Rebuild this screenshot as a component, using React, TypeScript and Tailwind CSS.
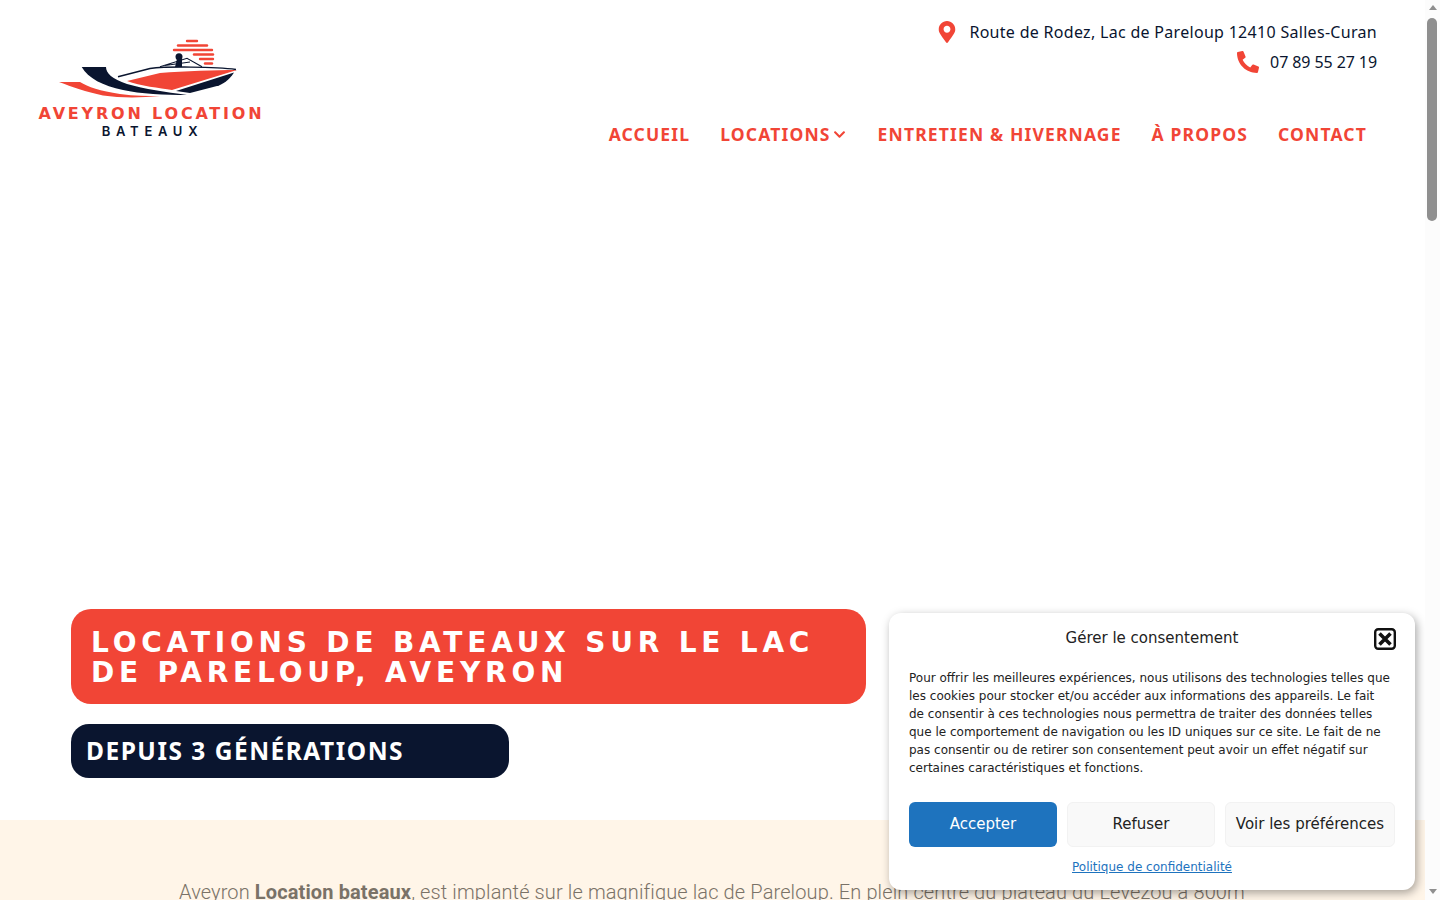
import { FaChevronDown, FaMapMarkerAlt, FaPhoneAlt } from 'react-icons/fa';

const navItems = ['ACCUEIL', 'LOCATIONS', 'ENTRETIEN & HIVERNAGE', 'À PROPOS', 'CONTACT'];

function Logo() {
  return (
    <div className="flex flex-col items-center w-[223px]">
      <svg width="223" height="66" viewBox="39 38 223 66" className="block">
        <g stroke="#f14536" strokeWidth="2.4" strokeLinecap="round">
          <line x1="187" x2="197" y1="41" y2="41" />
          <line x1="178" x2="207" y1="45.5" y2="45.5" />
          <line x1="174" x2="212" y1="50" y2="50" />
          <line x1="194" x2="213" y1="54.5" y2="54.5" />
          <line x1="200" x2="213" y1="59" y2="59" />
          <line x1="205" x2="212" y1="63.5" y2="63.5" />
        </g>
        <path d="M81.7 67H106C106 73 112 79 127 84C145 89 165 92 187 95C165 95 140 94 123 90C103 86 88 78 81.7 67Z" fill="#0a152f" />
        <path d="M59 82H80C88 87 100 91 120 94C135 96 148 96 160 96C140 98 120 98 103 95.5C86 92 72 87 59 82Z" fill="#f14536" />
        <path d="M127 81L160 73C185 71 215 70 237 70L172 90C160 88 140 86 127 81Z" fill="#f14536" />
        <path d="M176 91L234 72.5C229 80 224 84 217 86L190 93Z" fill="#0a152f" />
        <path d="M118 76.7L150 68.5C165 66.5 215 66.5 236 69.5" fill="none" stroke="#0a152f" strokeWidth="1.5" />
        <path d="M160 66.7L187 58.3L202 66.7M165 65.5L190 62" fill="none" stroke="#0a152f" strokeWidth="1.2" />
        <circle cx="179" cy="56.7" r="3.5" fill="#0a152f" />
        <path d="M175 67L177 59H182L182 67Z" fill="#0a152f" />
      </svg>
      <div className="font-['DejaVu_Sans',sans-serif] font-bold text-[16px] leading-[18px] tracking-[2.8px] text-[#f14536] whitespace-nowrap mt-[1px] pl-[2px]">
        AVEYRON LOCATION
      </div>
      <div className="font-['Inter',sans-serif] font-semibold text-[13px] leading-[16px] tracking-[5.7px] text-[#0a152f] whitespace-nowrap pl-[4px]">
        BATEAUX
      </div>
    </div>
  );
}

function Header() {
  return (
    <header className="flex justify-between pl-[39px] pr-[63px] h-[170px]">
      <div className="pt-[38px]">
        <Logo />
      </div>
      <div className="flex flex-col items-end">
        <div className="flex items-center h-[24px] mt-[20px] text-[#0a152f] text-[16px] font-['Noto_Sans',sans-serif]">
          <FaMapMarkerAlt className="text-[#f14536] text-[22px] mr-[11px]" />
          <span className="tracking-[0.3px]">Route de Rodez, Lac de Pareloup 12410 Salles-Curan</span>
        </div>
        <div className="flex items-center h-[24px] mt-[6px] text-[#0a152f] text-[16px] font-['Noto_Sans',sans-serif]">
          <FaPhoneAlt className="text-[#f14536] text-[22px] mr-[11px]" />
          <span className="tracking-[-0.09px]">07 89 55 27 19</span>
        </div>
        <nav className="flex items-center gap-[30px] mt-[48px] pr-[10px] text-[#f14536] font-['Noto_Sans',sans-serif] font-bold text-[17.5px] leading-[24px] tracking-[1.15px]">
          {navItems.map((item) => (
            <a key={item} className="flex items-center whitespace-nowrap">
              {item}
              {item === 'LOCATIONS' && <FaChevronDown className="text-[13px] ml-[2px] mr-[2px]" />}
            </a>
          ))}
        </nav>
      </div>
    </header>
  );
}

function ConsentModal() {
  return (
    <div className="absolute left-[889px] top-[613px] w-[526px] h-[277px] bg-white rounded-xl shadow-[2px_3px_10px_rgba(0,0,0,0.35)] px-[20px] font-['DejaVu_Sans',sans-serif] text-[#222222]">
      <div className="relative text-center text-[15px] leading-[20px] pt-[15px]">
        Gérer le consentement
        <svg width="22" height="22" viewBox="0 0 22 22" className="absolute right-[-1px] top-[15px]">
          <rect x="1.2" y="1.2" width="19.6" height="19.6" rx="3" fill="none" stroke="#111111" strokeWidth="2.4" />
          <path d="M5.5 5.5L16.5 16.5M16.5 5.5L5.5 16.5" stroke="#111111" strokeWidth="3.6" />
        </svg>
      </div>
      <p className="mt-[21px] w-[483px] text-[12px] leading-[18px]">
        Pour offrir les meilleures expériences, nous utilisons des technologies telles que les cookies pour stocker et/ou accéder aux informations des appareils. Le fait de consentir à ces technologies nous permettra de traiter des données telles que le comportement de navigation ou les ID uniques sur ce site. Le fait de ne pas consentir ou de retirer son consentement peut avoir un effet négatif sur certaines caractéristiques et fonctions.
      </p>
      <div className="flex gap-[10px] mt-[25px] text-[15px]">
        <button className="w-[148px] h-[45px] rounded-md bg-[#1e73be] text-white">Accepter</button>
        <button className="w-[148px] h-[45px] rounded-md bg-[#f9f9f9] border border-[#f2f2f2]">Refuser</button>
        <button className="w-[170px] h-[45px] rounded-md bg-[#f9f9f9] border border-[#f2f2f2] whitespace-nowrap">Voir les préférences</button>
      </div>
      <div className="text-center mt-[11px] text-[12px] leading-[18px]">
        <a className="text-[#1e73be] underline">Politique de confidentialité</a>
      </div>
    </div>
  );
}

function FakeScrollbar() {
  return (
    <div className="absolute right-0 top-0 w-[15px] h-[900px] bg-[#fcfcfc]">
      <div className="absolute left-[4px] top-[5px] w-0 h-0 border-x-[4px] border-x-transparent border-b-[5px] border-b-[#8f8f8f]" />
      <div className="absolute left-[2px] top-[18px] w-[10px] h-[203px] rounded-full bg-[#8f8f8f]" />
      <div className="absolute left-[4px] bottom-[6px] w-0 h-0 border-x-[4px] border-x-transparent border-t-[5px] border-t-[#8f8f8f]" />
    </div>
  );
}

export default function App() {
  return (
    <div className="relative w-[1440px] h-[900px] overflow-hidden bg-white">
      <Header />
      <section className="pl-[71px] pt-[439px] h-[650px]">
        <div className="w-[795px] h-[95px] bg-[#f14536] rounded-[20px] pl-[20px] pt-[19px]">
          <h1 className="font-['DejaVu_Sans',sans-serif] font-bold text-white text-[28px] leading-[30px] tracking-[4.8px] whitespace-nowrap">
            LOCATIONS DE BATEAUX SUR LE LAC<br />DE PARELOUP, AVEYRON
          </h1>
        </div>
        <div className="w-[438px] h-[54px] mt-[20px] bg-[#0a152f] rounded-[18px] pl-[15px] flex items-center">
          <h2 className="font-['Noto_Sans',sans-serif] font-bold text-white text-[24.5px] tracking-[1.5px] whitespace-nowrap">DEPUIS 3 GÉNÉRATIONS</h2>
        </div>
      </section>
      <section className="absolute left-0 top-[820px] w-[1425px] h-[80px] bg-[#fff5e8] pt-[58px] pl-[179px]">
        <p className="font-['Roboto',sans-serif] font-light text-[20px] leading-[28px] tracking-[0.12px] text-[#7a7267] whitespace-nowrap">
          Aveyron <strong className="font-bold">Location bateaux</strong>, est implanté sur le magnifique lac de Pareloup. En plein centre du plateau du Levezou à 800m
        </p>
      </section>
      <ConsentModal />
      <FakeScrollbar />
    </div>
  );
}
